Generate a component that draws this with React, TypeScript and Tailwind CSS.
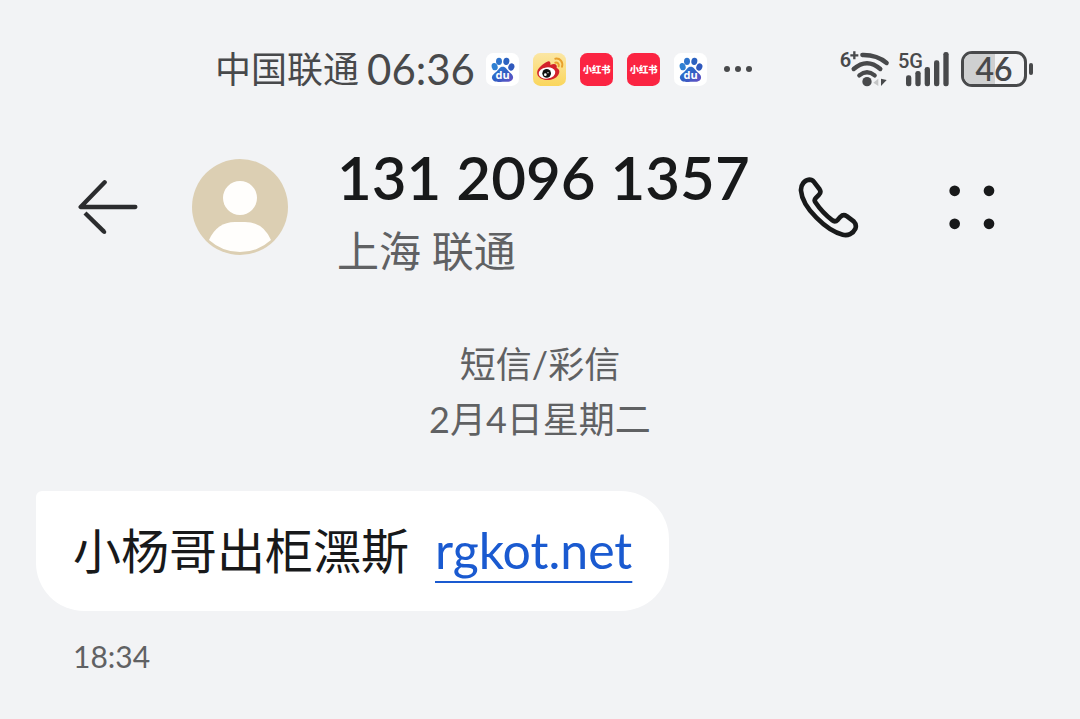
const fontStack = "font-['Lato','Noto_Sans_CJK_SC',sans-serif]";

function BaiduIcon() {
  return (
    <svg viewBox="0 0 99 99" className="size-[33px]" role="img" aria-label="Baidu">
      <defs>
        <linearGradient id="paw" x1="0" y1="0" x2="1" y2="1">
          <stop offset="0" stopColor="#2f86d6" />
          <stop offset="0.5" stopColor="#2f5fc4" />
          <stop offset="1" stopColor="#6a4fc4" />
        </linearGradient>
      </defs>
      <rect width="99" height="99" rx="22" fill="#ffffff" />
      <ellipse cx="26" cy="41" rx="9" ry="11" fill="#2f80d2" transform="rotate(-15 26 41)" />
      <ellipse cx="39" cy="25" rx="9" ry="11" fill="#2f74cc" />
      <ellipse cx="61" cy="25" rx="9" ry="11" fill="#2c62c0" transform="rotate(10 61 25)" />
      <ellipse cx="76" cy="42" rx="9" ry="11" fill="#3059bd" transform="rotate(20 76 42)" />
      <path
        d="M50 41C60 41 62 49 69 56C76 62 83 67 81 76C78 88 64 87 50 86C36 87 22 89 18 76C16 67 24 62 31 56C39 49 40 41 50 41Z"
        fill="url(#paw)"
      />
      <text
        x="50"
        y="79"
        textAnchor="middle"
        fontSize="33"
        fontWeight="700"
        fill="#ffffff"
        className="font-['Open_Sans',sans-serif]"
      >
        du
      </text>
    </svg>
  );
}

function WeiboIcon() {
  return (
    <svg viewBox="0 0 99 99" className="size-[33px]" role="img" aria-label="Weibo">
      <defs>
        <linearGradient id="weibo" x1="0" y1="0" x2="0" y2="1">
          <stop offset="0" stopColor="#fbe6a4" />
          <stop offset="1" stopColor="#fad65c" />
        </linearGradient>
      </defs>
      <rect width="99" height="99" rx="22" fill="url(#weibo)" />
      <path
        d="M41 27C50 21 54 28 52 36C64 30 74 33 71 45C80 49 81 57 76 65C68 79 49 83 34 80C19 77 10 67 13 55C16 43 30 33 41 27Z"
        fill="#d3222a"
      />
      <ellipse cx="42" cy="60" rx="25" ry="17" fill="#ffffff" transform="rotate(-8 42 60)" />
      <circle cx="41" cy="61" r="13" fill="#111111" />
      <circle cx="37" cy="65" r="4" fill="#ffffff" />
      <circle cx="45" cy="59" r="2" fill="#ffffff" />
      <path
        d="M67 17C81 15 91 26 87 41M67 29C74 28 79 33 77 40"
        fill="none"
        stroke="#e8a02c"
        strokeWidth="6"
        strokeLinecap="round"
      />
    </svg>
  );
}

function RedNoteIcon() {
  return (
    <svg viewBox="0 0 99 99" className="size-[33px]" role="img" aria-label="小红书">
      <rect width="99" height="99" rx="22" fill="#fb2442" />
      <text
        x="50"
        y="60"
        textAnchor="middle"
        fontSize="28"
        fontWeight="900"
        fill="#ffffff"
        className="font-['Noto_Sans_CJK_SC',sans-serif]"
      >
        小红书
      </text>
    </svg>
  );
}

function WifiIcon() {
  return (
    <svg
      viewBox="0 0 144 114"
      className="h-[38px] w-12 overflow-visible"
      role="img"
      aria-label="Wi-Fi 6+"
    >
      <text
        x="-4"
        y="50"
        fontSize="60"
        fontWeight="600"
        fill="#48494b"
        className="font-['Roboto',sans-serif]"
      >
        6
      </text>
      <path d="M40 4V28M28 16H52" stroke="#48494b" strokeWidth="7" />
      <g fill="none" stroke="#48494b" strokeWidth="13" strokeLinecap="round">
        <path d="M64 15Q108 14 137 39" />
        <path d="M38 57Q78 22 118 57" />
        <path d="M55 76Q78 58 101 76" />
      </g>
      <circle cx="78" cy="95" r="14" fill="#48494b" />
      <path d="M112 86V108L97 98Z" fill="#c4c5c6" />
      <path d="M120 86L137 90L120 108Z" fill="#48494b" />
    </svg>
  );
}

function SignalIcon() {
  const tops = [76, 63, 51, 31, 6];

  return (
    <svg
      viewBox="0 0 150 114"
      className="h-[38px] w-[50px] overflow-visible"
      role="img"
      aria-label="5G"
    >
      <text
        x="-3"
        y="53"
        fontSize="60"
        fontWeight="500"
        fill="#48494b"
        className="font-['Roboto',sans-serif]"
      >
        5G
      </text>
      {tops.map((top, i) => (
        <rect
          key={top}
          x={21 + i * 28}
          y={top}
          width="16"
          height={109 - top}
          rx="7"
          fill="#48494b"
        />
      ))}
    </svg>
  );
}

function Battery({ level }: { level: number }) {
  return (
    <div className="flex items-center gap-0.5">
      <div className="relative flex h-9 w-[66px] items-center justify-center rounded-[11px] border-3 border-[#48494b]">
        <div
          className="absolute inset-y-0 left-0 rounded-l-lg bg-[#cfd0d1]"
          style={{ width: `${level + 6}%` }}
        ></div>
        <span className="relative text-[32px] leading-10 font-semibold">{level}</span>
      </div>
      <div className="h-3 w-1 rounded-full bg-[#48494b]"></div>
    </div>
  );
}

function StatusBar() {
  return (
    <div className="flex items-center pt-[45px] pr-[47px] pl-[215px] text-[#48494b]">
      <span className="text-[36px] leading-12">中国联通</span>
      <span className="ml-2 text-[42px] leading-12">06:36</span>
      <div className="ml-[11px] flex items-center gap-3.5">
        <BaiduIcon />
        <WeiboIcon />
        <RedNoteIcon />
        <RedNoteIcon />
        <BaiduIcon />
      </div>
      <div className="ml-[17px] flex gap-[5px]">
        <span className="size-[6px] rounded-full bg-[#48494b]"></span>
        <span className="size-[6px] rounded-full bg-[#48494b]"></span>
        <span className="size-[6px] rounded-full bg-[#48494b]"></span>
      </div>
      <div className="ml-auto flex items-center">
        <WifiIcon />
        <div className="ml-2.5">
          <SignalIcon />
        </div>
        <div className="ml-3">
          <Battery level={46} />
        </div>
      </div>
    </div>
  );
}

function Avatar() {
  return (
    <svg viewBox="0 0 96 96" className="size-24 shrink-0" aria-hidden="true">
      <circle cx="48" cy="48" r="48" fill="#dccfb3" />
      <circle cx="48" cy="39" r="17" fill="#fffefc" />
      <path d="M17 81Q25 63 43 63H53Q71 63 79 81A46 46 0 0 1 17 81Z" fill="#fffefc" />
    </svg>
  );
}

function ChatHeader() {
  return (
    <header className="flex items-center pt-8 pr-[85px] pl-[78px]">
      <button type="button" aria-label="返回" className="shrink-0">
        <svg viewBox="54 86 180 168" className="h-14 w-[60px]">
          <g fill="none" stroke="#2b2c2e" strokeWidth="13" strokeLinejoin="round">
            <path d="M134 96L62 170H226" strokeLinecap="round" />
            <path d="M75 188L132 244" />
          </g>
          <circle cx="133" cy="245" r="6" fill="#2b2c2e" />
        </svg>
      </button>
      <div className="ml-[54px]">
        <Avatar />
      </div>
      <div className="ml-[49px] flex-1 pt-4">
        <h1 className="text-[60px] leading-[72px] font-semibold text-[#18191a]">
          131 2096 1357
        </h1>
        <p className="text-[42px] leading-[76px] text-[#606163]">上海 联通</p>
      </div>
      <button type="button" aria-label="拨打电话">
        <svg viewBox="54 49 182 184" className="size-[61px]">
          <path
            d="M62 90C61 72 73 58 87 57C94 57 98 60 101 64L118 86C122 92 121 98 116 103L107 112C103 116 102 121 106 126C120 147 140 167 156 179C162 184 168 183 173 178L181 169C187 163 194 163 200 167L221 183C228 190 229 197 226 205C219 220 203 227 188 223C140 212 66 142 62 90Z"
            fill="none"
            stroke="#18191a"
            strokeWidth="14"
            strokeLinejoin="round"
          />
        </svg>
      </button>
      <button type="button" aria-label="更多" className="ml-[90px]">
        <svg viewBox="0 0 138 134" className="h-[45px] w-[46px]" fill="#18191a">
          <circle cx="17" cy="17" r="16" />
          <circle cx="120" cy="17" r="16" />
          <circle cx="17" cy="116" r="16" />
          <circle cx="120" cy="116" r="16" />
        </svg>
      </button>
    </header>
  );
}

export default function App() {
  return (
    <div className={`min-h-screen bg-[#f2f3f5] ${fontStack}`}>
      <StatusBar />
      <ChatHeader />
      <main className="px-9 pt-12">
        <div className="text-center text-[36px] leading-[55px] text-[#606163]">
          <p>短信/彩信</p>
          <p>2月4日星期二</p>
        </div>
        <div className="mt-11 w-fit rounded-[48px] rounded-tl-md bg-white px-[37px] pt-[23px] pb-6">
          <p className="text-[48px] leading-[72px] whitespace-pre text-[#18191a]">
            小杨哥出柜潶斯
            <a
              href="#"
              className="ml-[26px] text-[50px] text-[#1a5ad0] underline decoration-2 underline-offset-[12px] [text-decoration-skip-ink:none]"
            >
              rgkot.net
            </a>
          </p>
        </div>
        <time className="mt-[23px] block px-[37px] text-[30px] leading-11 text-[#606163]">
          18:34
        </time>
      </main>
    </div>
  );
}
